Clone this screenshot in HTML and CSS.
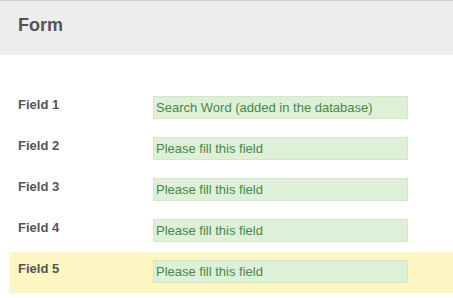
FILE: index.html
```html
<!DOCTYPE html>
<html lang="en">
<head>
  <meta charset="UTF-8">
  <title>Form</title>
  <link rel="stylesheet" href="styles.css">
</head>
<body>
  <div class="header">
    <h1>Form</h1>
  </div>

  <form class="fields">
    <div class="row">
      <label for="f1">Field 1</label>
      <input type="text" id="f1" value="Search Word (added in the database)">
    </div>
    <div class="row">
      <label for="f2">Field 2</label>
      <input type="text" id="f2" value="Please fill this field">
    </div>
    <div class="row">
      <label for="f3">Field 3</label>
      <input type="text" id="f3" value="Please fill this field">
    </div>
    <div class="row">
      <label for="f4">Field 4</label>
      <input type="text" id="f4" value="Please fill this field">
    </div>
    <div class="row highlight">
      <label for="f5">Field 5</label>
      <input type="text" id="f5" value="Please fill this field">
    </div>
  </form>
</body>
</html>
```

FILE: styles.css
```css
* {
  margin: 0;
  padding: 0;
  box-sizing: border-box;
}

body {
  font-family: 'Liberation Sans', Arial, sans-serif;
  background-color: #fff;
  color: #555;
}

.header {
  background-color: #ededed;
  border-top: 1px solid #d0d0d0;
  height: 55px;
  padding: 14px 18px 0;
}

.header h1 {
  font-size: 18px;
  line-height: 21px;
  font-weight: bold;
  color: #555;
}

.fields {
  padding-top: 33px;
  padding-left: 9px;
}

.row {
  display: flex;
  align-items: flex-start;
  height: 41px;
  padding: 8px 0 0 9px;
}

.row.highlight {
  background-color: #fdf6c2;
}

.row label {
  width: 135px;
  margin-top: 1px;
  font-size: 13px;
  line-height: 15px;
  font-weight: bold;
  color: #555;
}

.row input {
  width: 255px;
  height: 23px;
  padding: 0 2px;
  border: 1px solid #d0e9c6;
  background-color: #dff0d8;
  color: #468847;
  font-family: 'Liberation Sans', Arial, sans-serif;
  font-size: 13px;
  outline: none;
}
```
